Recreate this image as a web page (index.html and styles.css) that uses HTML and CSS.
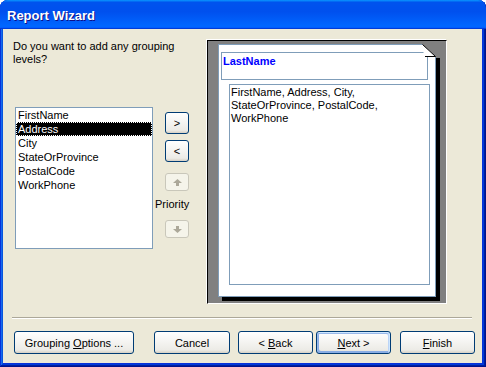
FILE: index.html
```html
<!DOCTYPE html>
<html lang="en">
<head>
    <meta charset="UTF-8">
    <title>Report Wizard</title>
    <link rel="stylesheet" href="styles.css">
</head>
<body>
    <div class="window">
        <div class="title-bar">
            <span class="title">Report Wizard</span>
        </div>

        <div class="window-body">
            <div class="wizard">
                <!-- Field chooser -->
                <div class="choices">
                    <p class="question">Do you want to add any grouping levels?</p>
                    <div class="picker">
                        <ul class="field-list">
                            <li>FirstName</li>
                            <li class="selected">Address</li>
                            <li>City</li>
                            <li>StateOrProvince</li>
                            <li>PostalCode</li>
                            <li>WorkPhone</li>
                        </ul>
                        <div class="movers">
                            <button class="btn mover move-in">&gt;</button>
                            <button class="btn mover move-out">&lt;</button>
                            <button class="btn arrow up" disabled>
                                <svg width="9" height="7" viewBox="0 0 9 7"><path d="M4.5 0 L9 4 L6 4 L6 7 L3 7 L3 4 L0 4 Z" fill="#aca899"/></svg>
                            </button>
                            <span class="priority">Priority</span>
                            <button class="btn arrow down" disabled>
                                <svg width="9" height="7" viewBox="0 0 9 7"><path d="M4.5 7 L9 3 L6 3 L6 0 L3 0 L3 3 L0 3 Z" fill="#aca899"/></svg>
                            </button>
                        </div>
                    </div>
                </div>

                <!-- Report preview -->
                <div class="preview">
                    <div class="page">
                        <div class="group-head">LastName</div>
                        <div class="detail">FirstName, Address, City, StateOrProvince, PostalCode, WorkPhone</div>
                        <svg class="fold" width="19" height="14" viewBox="0 0 19 14">
                            <polygon points="0,0 19,0 19,14 14,14 14,13" fill="#808080"/>
                            <polygon points="0.5,0.5 13.5,12.5 2,12.5" fill="#fff"/>
                            <polyline points="0.5,0.5 13.5,12.5 3,12.5" fill="none" stroke="#000" stroke-width="1"/>
                        </svg>
                    </div>
                </div>
            </div>

            <hr class="divider">

            <div class="actions">
                <button class="btn grouping">Grouping <u>O</u>ptions ...</button>
                <button class="btn cancel">Cancel</button>
                <button class="btn back">&lt; <u>B</u>ack</button>
                <button class="btn next default"><u>N</u>ext &gt;</button>
                <button class="btn finish"><u>F</u>inish</button>
            </div>
        </div>
    </div>
</body>
</html>
```

FILE: styles.css
```css
* {
    margin: 0;
    padding: 0;
    box-sizing: border-box;
}

html, body {
    background: #ffffff;
    overflow: hidden;
}

body {
    font-family: 'Liberation Sans', Arial, sans-serif;
    font-size: 11px;
    color: #000000;
}

.window {
    width: 486px;
    height: 367px;
    display: flex;
    flex-direction: column;
    background: #0831d9;
    border-radius: 8px 8px 0 0;
    box-shadow: inset -1px -1px #00138c, inset 1px 1px #0831d9,
                inset -2px -2px #001ea0, inset 2px 2px #166aee,
                inset -3px -3px #003bda, inset 3px 3px #0855dd;
}

.title-bar {
    height: 29px;
    padding: 3px 0 0 7px;
    border-radius: 8px 8px 0 0;
    background: linear-gradient(180deg, #0997ff, #0053ee 8%, #0050ee 40%, #0066ff 88%, #0066ff 93%, #005bff 95%, #003dd7 96%, #003dd7);
}

.title {
    font-size: 13px;
    font-weight: bold;
    line-height: 26px;
    color: #ffffff;
    text-shadow: 1px 1px #0f1089;
}

.window-body {
    flex: 1;
    margin: 0 4px 4px 3px;
    background: #ece9d8;
}

.wizard {
    display: flex;
    padding: 10px 0 0 10px;
}

.choices {
    width: 193px;
}

.question {
    height: 67px;
    margin-top: 1px;
    line-height: 13px;
    padding-right: 10px;
}

.picker {
    display: flex;
}

.field-list {
    list-style: none;
    width: 138px;
    height: 142px;
    margin-left: 2px;
    background: #ffffff;
    border: 1px solid #7f9db9;
}

.field-list li {
    height: 14px;
    line-height: 14px;
    padding-left: 2px;
    white-space: nowrap;
}

.field-list li.selected {
    background: #000000;
    color: #ffffff;
    outline: 1px dotted #ffffff;
    outline-offset: -1px;
}

.movers {
    width: 34px;
    margin-left: 2px;
    display: flex;
    flex-direction: column;
    align-items: flex-end;
}

.btn {
    font-family: 'Liberation Sans', Arial, sans-serif;
    font-size: 11px;
    color: #000000;
    text-align: center;
    border: 1px solid #003c74;
    border-radius: 3px;
    background: linear-gradient(180deg, #ffffff, #ecebe6 86%, #d6d0c5);
}

.btn u {
    text-decoration: underline;
}

.btn svg {
    display: block;
    margin: 0 auto;
}

.btn.mover {
    width: 24px;
    height: 22px;
}

.move-in {
    margin-top: 5px;
}

.move-out {
    margin-top: 6px;
}

.btn.arrow {
    width: 24px;
    height: 18px;
    border-color: #c9c7ba;
    background: #f5f4ea;
}

.btn.up {
    margin-top: 11px;
}

.priority {
    margin-top: 7px;
    line-height: 13px;
    align-self: flex-start;
}

.btn.down {
    margin-top: 9px;
}

.preview {
    width: 240px;
    height: 264px;
    margin: 1px 0 0 1px;
    padding: 3px 0 0 10px;
    background: #808080;
    border: 1px solid;
    border-color: #000000 #ffffff #ffffff #000000;
    box-shadow: -1px -1px 0 #ffffff;
}

.page {
    position: relative;
    width: 218px;
    height: 253px;
    background: #ffffff;
    border: 1px solid #7f9db9;
    box-shadow: 4px 4px 0 #000000;
}

.group-head {
    width: 207px;
    height: 28px;
    margin: 7px 0 0 2px;
    padding: 2px 0 0 1px;
    border: 1px solid #7f9db9;
    color: #0000ff;
    font-weight: bold;
    line-height: 13px;
}

.detail {
    width: 201px;
    height: 201px;
    margin: 4px 0 0 10px;
    padding: 1px 2px 0 1px;
    border: 1px solid #7f9db9;
    line-height: 13px;
}

.fold {
    position: absolute;
    top: -1px;
    left: 203px;
}

.divider {
    border: none;
    border-top: 1px solid #aca899;
    border-bottom: 1px solid #ffffff;
    margin: 13px 10px 0 9px;
}

.actions {
    display: flex;
    padding-left: 11px;
    margin-top: 12px;
}

.actions .btn {
    width: 75px;
    height: 23px;
}

.actions .grouping {
    width: 120px;
}

.actions .cancel {
    width: 76px;
    margin-left: 20px;
}

.actions .back {
    margin-left: 8px;
}

.actions .next {
    margin-left: 3px;
}

.actions .finish {
    margin-left: 9px;
}

.btn.default {
    box-shadow: inset -1px 1px #cee7ff, inset 1px 2px #98b8ea,
                inset -2px 2px #bcd4f6, inset 1px -1px #89ade4,
                inset 2px -2px #89ade4;
}
```
